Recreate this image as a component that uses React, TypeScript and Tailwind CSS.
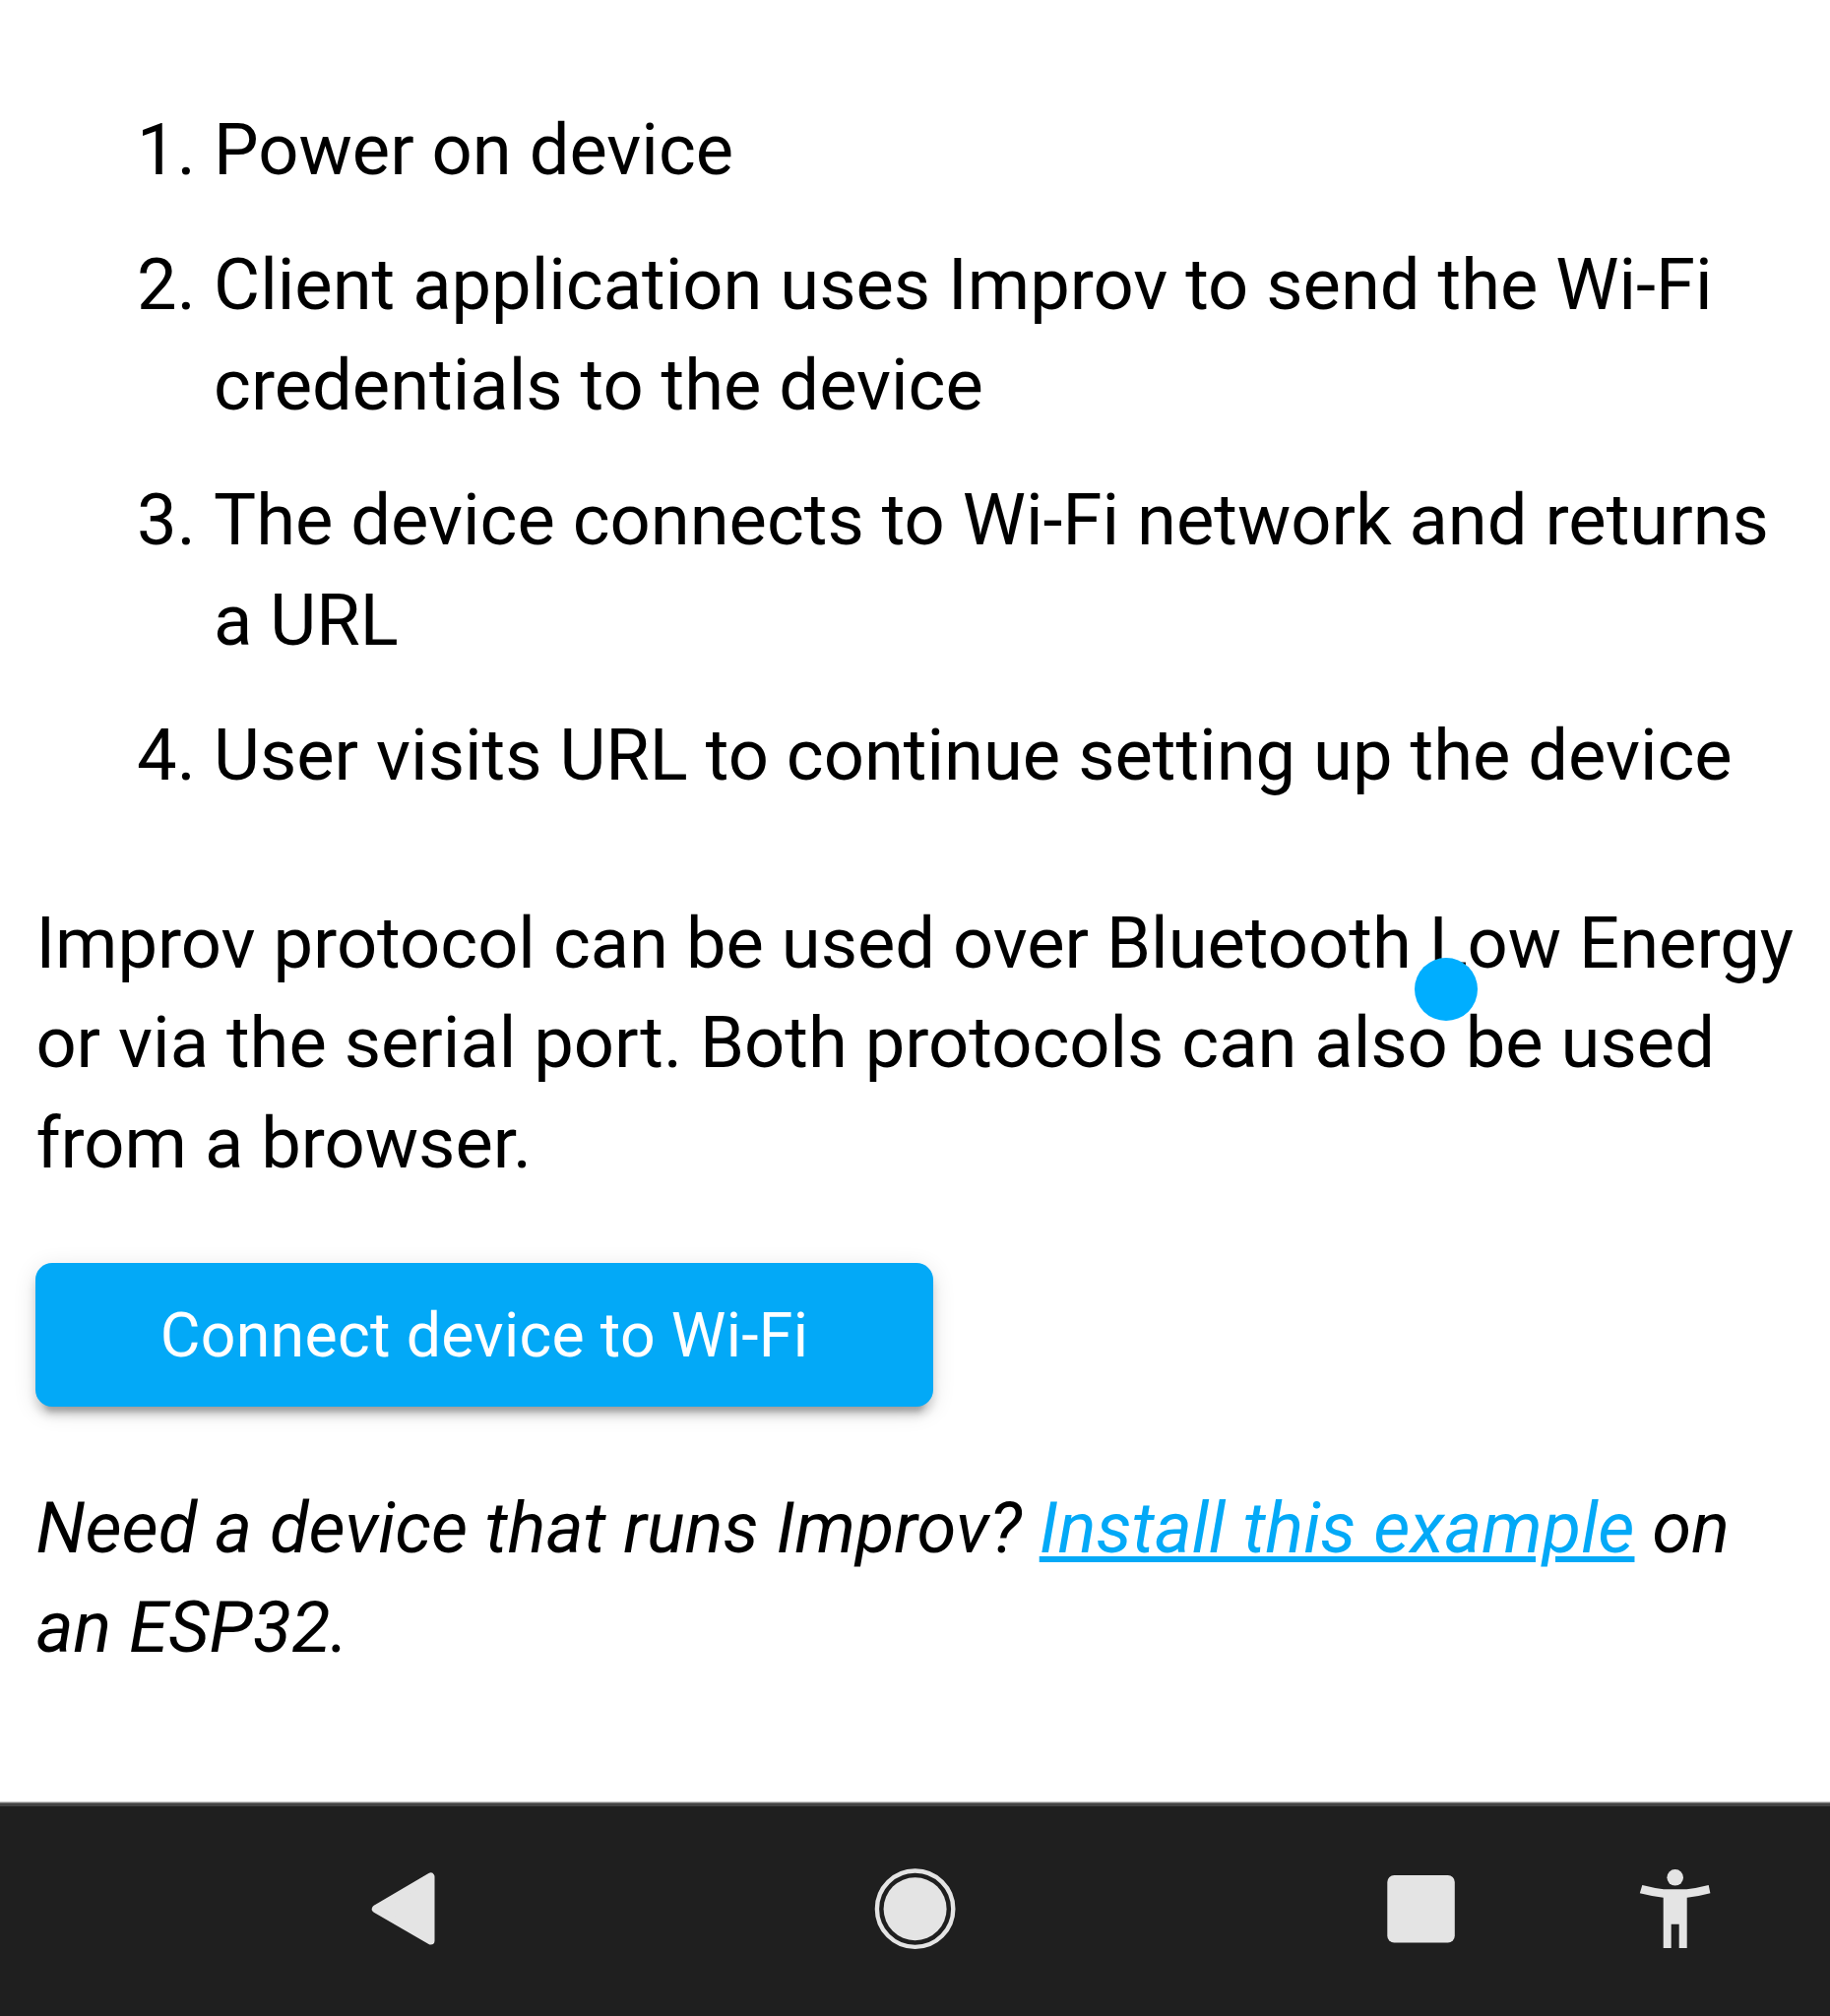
const steps = [
  ["Power on device"],
  ["Client application uses Improv to send the Wi-Fi", "credentials to the device"],
  ["The device connects to Wi-Fi network and returns", "a URL"],
  ["User visits URL to continue setting up the device"],
];

function Lines({ lines }: { lines: string[] }) {
  return (
    <>
      {lines.map((l) => (
        <span key={l} className="block whitespace-nowrap">{l}</span>
      ))}
    </>
  );
}

export default function App() {
  return (
    <div className="flex h-[2048px] w-[1859px] flex-col overflow-hidden bg-white font-[Roboto,sans-serif] text-[72.3px] leading-[101.5px] text-black">
      <main className="relative h-[1830px] px-[36.4px] pt-[102px]">
        <ol className="flex flex-col gap-[35.8px]">
          {steps.map((s, i) => (
            <li key={s[0]} className="flex">
              <span className="w-[180.7px] shrink-0 pl-[102.7px]">{i + 1}.</span>
              <div><Lines lines={s} /></div>
            </li>
          ))}
        </ol>
        <p className="mt-[89.5px]">
          <Lines lines={["Improv protocol can be used over Bluetooth Low Energy", "or via the serial port. Both protocols can also be used", "from a browser."]} />
        </p>
        <button className="mt-[71px] flex h-[146px] w-[911.2px] items-center justify-center rounded-[17px] bg-[#03a9f7] text-[62.6px] tracking-[0.3px] text-white shadow-[0_14px_5px_-9px_rgba(0,0,0,0.2),0_9px_9px_0_rgba(0,0,0,0.14),0_5px_23px_0_rgba(0,0,0,0.12)]">
          Connect device to Wi-Fi
        </button>
        <p className="mt-[72.4px] italic">
          <span className="block whitespace-nowrap">
            Need a device that runs Improv? <a className="text-[#03a9f7] underline decoration-[6px] underline-offset-[4px]">Install this example</a> on
          </span>
          <span className="block">an ESP32.</span>
        </p>
        <div className="absolute left-[1437px] top-[973px] size-[64px] rounded-full bg-[#00aeff]" />
      </main>
      <nav className="h-[218px] bg-[#1f1f1f]">
        <div className="h-px bg-[#c8c8c8]" />
        <div className="h-px bg-[#777]" />
        <div className="h-[3px] bg-[#444]" />
        <svg className="block h-[213px] w-[1859px]" viewBox="0 1835 1859 213" fill="#e4e4e4">
          <path d="M381.800 1939.3 437.500 1906.500V1971.500Z" stroke="#e4e4e4" strokeWidth="8" strokeLinejoin="round" />
          <circle cx="929.600" cy="1939.2" r="32" />
          <circle cx="929.600" cy="1939.2" r="38.700" fill="none" stroke="#e4e4e4" strokeWidth="4.400" />
          <rect x="1409.300" y="1905" width="68.500" height="68.500" rx="7" />
          <circle cx="1701.700" cy="1907.3" r="8.300" />
          <path d="M1668.300 1915Q1680 1918 1690 1919.300H1713.400Q1724 1918 1735.700 1915L1737.400 1923.300Q1726 1926.500 1713.700 1927.700V1979H1705.700V1954.800H1697.700V1979H1689.700V1927.700Q1678 1926.500 1665.800 1923.300Z" />
        </svg>
      </nav>
    </div>
  );
}
